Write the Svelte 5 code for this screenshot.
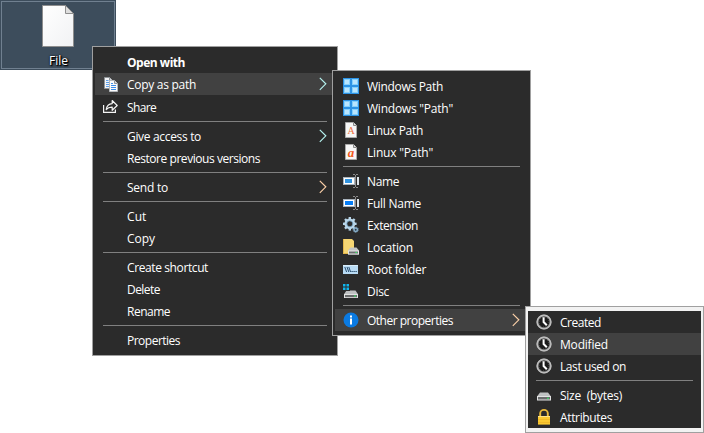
<script>
  const main = [
    { t: 'Open with', w: 58, bold: true },
    { t: 'Copy as path', w: 69, icon: 'copy', arrow: '#b5f2ef', on: true, gap: true },
    { t: 'Share', w: 29, icon: 'share' },
    null,
    { t: 'Give access to', w: 74, arrow: '#b5f2ef' },
    { t: 'Restore previous versions', w: 133 },
    null,
    { t: 'Send to', w: 41, arrow: '#fbd0a8' },
    null,
    { t: 'Cut', w: 19.5 },
    { t: 'Copy', w: 28 },
    null,
    { t: 'Create shortcut', w: 81 },
    { t: 'Delete', w: 33 },
    { t: 'Rename', w: 43 },
    null,
    { t: 'Properties', w: 53 }
  ];
  const paths = [
    { t: 'Windows Path', w: 76, icon: 'win' },
    { t: 'Windows "Path"', w: 86, icon: 'win' },
    { t: 'Linux Path', w: 56, icon: 'doc' },
    { t: 'Linux "Path"', w: 66, icon: 'docItalic' },
    null,
    { t: 'Name', w: 32, icon: 'name' },
    { t: 'Full Name', w: 54, icon: 'fullname' },
    { t: 'Extension', w: 51, icon: 'gear' },
    { t: 'Location', w: 46, icon: 'location' },
    { t: 'Root folder', w: 59, icon: 'root' },
    { t: 'Disc', w: 22, icon: 'disc' },
    null,
    { t: 'Other properties', w: 86, icon: 'info', arrow: '#fbd0a8', on: true }
  ];
  const props = [
    { t: 'Created', w: 41, icon: 'clock' },
    { t: 'Modified', w: 48, icon: 'clock', on: true },
    { t: 'Last used on', w: 66, icon: 'clock' },
    null,
    { t: 'Size  (bytes)', w: 62, icon: 'drive' },
    { t: 'Attributes', w: 52, icon: 'lock' }
  ];
  const teeth = [0, 45, 90, 135, 180, 225, 270, 315];

  // Spreads the label's letters over the given advance width.
  function fit(node, width) {
    const natural = node.getBoundingClientRect().width;
    node.style.letterSpacing = (width - natural) / node.textContent.length + 'px';
  }
</script>

{#snippet drive()}
  <path d="M3.5 7.5h9l2.5 3.7H1z" fill="#bfc1c2" />
  <path d="M1 11h14v4H1z" fill="#e1e2e2" />
  <path d="M2 12h12v2.2H2z" fill="#696b6c" />
  <path d="M11 12.5h2v1h-2z" fill="#35ec62" />
{/snippet}

{#snippet glyph(name)}
  <svg width="16" height="16" viewBox="0 0 16 16">
    {#if name === 'copy'}
      <path d="M1.5 1.5h5l3 3v8h-8z" fill="#f3f5f7" stroke="#8f9498" />
      <path d="M6.5 1.5v3h3" fill="#d5d8db" stroke="#8f9498" />
      <path d="M3 4.5h2.5M3 6.5h4M3 8.5h3M3 10.5h3" stroke="#5e9fe8" />
      <path d="M6.5 4.5h5l3 3v8h-8z" fill="#fafbfc" stroke="#b5b9bc" />
      <path d="M11.5 4.5v3h3" fill="#d5d8db" stroke="#8f9498" />
      <path d="M8 9.5h5M8 11.5h5M8 13.5h5M8 7.5h2" stroke="#3d8de8" />
    {:else if name === 'share'}
      <g fill="none" stroke="#f4f4f4" stroke-width="1.2">
        <path d="M.6 6v7.4h11.8v-3" />
        <path d="M3.2 10.5C3.8 6.6 6 4.7 9.2 4.6V1.5l5 5-5 4.8V8.1C6.5 8 4.8 8.7 3.2 10.5z" stroke-linejoin="round" />
      </g>
    {:else if name === 'win'}
      <path d="M0 0h16v16H0z" fill="#2d93e6" />
      <path d="M1 1h6v6H1zM9 1h6v6H9zM1 9h6v6H1zM9 9h6v6H9z" fill="#85d0fb" />
      <path d="M2 2h4v4H2zM10 2h4v4h-4zM2 10h4v4H2zM10 10h4v4h-4z" fill="#b9e5ff" />
    {:else if name === 'doc' || name === 'docItalic'}
      <path d="M2.5.5h8l3 3v12h-11z" fill="#f7f7f7" stroke="#aaaaaa" />
      <path d="M10.5.5v3h3" fill="#dddddd" stroke="#888888" />
      {#if name === 'doc'}
        <text x="8" y="12" text-anchor="middle" font-family="Liberation Serif, serif" font-size="10" fill="#f0703c">A</text>
      {:else}
        <text x="8" y="12.6" text-anchor="middle" font-family="Liberation Serif, serif" font-size="13" font-weight="bold" font-style="italic" fill="#f15a1c">a</text>
      {/if}
    {:else if name === 'name' || name === 'fullname'}
      <path d="M0 4h12v8H0z" fill="#a9b3bd" />
      <path d="M1 5h10v6H1z" fill="#ffffff" />
      <path d={name === 'name' ? 'M2 6h7v4H2z' : 'M2 6h8v4H2z'} fill={name === 'name' ? '#3294e0' : '#067df5'} />
      <path d="M14 4h2v8h-2z" fill="#dfe5ea" />
      <path d="M10 1.5h2M13 1.5h2M10 14.5h2M13 14.5h2M12.5 2v12" stroke="#8b8b8b" />
    {:else if name === 'gear'}
      <g stroke="#b9d6e9" stroke-width="2.4">
        {#each teeth as a}
          <path d="M6.8 0v3" transform="rotate({a} 6.8 6.8)" />
        {/each}
      </g>
      <circle cx="6.8" cy="6.8" r="4.1" fill="none" stroke="#b9d6e9" stroke-width="2.6" />
      <circle cx="6.8" cy="6.8" r="3" fill="none" stroke="#6d9cbd" stroke-width=".8" />
      <circle cx="12.7" cy="12.7" r="1.7" fill="#2b3942" stroke="#88b0cc" stroke-width="1.5" />
      <circle cx="12.7" cy="12.7" r="2.6" fill="none" stroke="#88b0cc" stroke-width="1" stroke-dasharray="1 1" />
    {:else if name === 'location'}
      <path d="M0 0h9l2 2v13H0z" fill="#f6d673" />
      <path d="M0 0h1v15H0zM1 14h6v1H1z" fill="#e3b64b" />
      <path d="M7.5 8.5h6l2.5 3v4H5v-4z" fill="#c3c5c6" />
      <path d="M5 11.5h11v4H5z" fill="#e6e7e7" />
      <path d="M6 12.5h9v2H6z" fill="#6d6f70" />
      <path d="M12.5 13h1.5v1h-1.5z" fill="#35ec62" />
    {:else if name === 'root'}
      <path d="M0 4h15v9H0z" fill="#b9dbf4" />
      <path d="M0 4h15v1H0z" fill="#d9edfa" />
      <path d="M1.8 6l1.8 5M4 6l1.8 5M5.8 6l1.8 5" stroke="#153a5c" stroke-width=".9" />
      <path d="M8.5 10h1.2v1H8.5zM10.5 10h1.2v1h-1.2zM12.5 10h1.2v1h-1.2z" fill="#153a5c" />
    {:else if name === 'disc'}
      {@render drive()}
      <path d="M-1 0h8v8h-8z" fill="#2b2b2b" />
      <path d="M0 1h2.5v2.5H0zM3.5 1H6v2.5H3.5zM0 4.5h2.5V7H0zM3.5 4.5H6V7H3.5z" fill="#10b6ed" />
    {:else if name === 'info'}
      <circle cx="8" cy="8" r="7.5" fill="#0a7ae2" />
      <path d="M7 3.5h2v2H7zM7 6.5h2v6H7z" fill="#ffffff" />
    {:else if name === 'clock'}
      <circle cx="8" cy="8" r="6.6" fill="#1c1c1c" stroke="#a9a9a9" stroke-width="2" />
      <circle cx="8" cy="8" r="7" fill="none" stroke="#d0d0d0" stroke-width=".7" />
      <circle cx="8" cy="8" r="5" fill="none" stroke="#777777" stroke-width=".9" stroke-dasharray=".8 1.82" />
      <path d="M7.6 3.2V8l3.2 3.2" fill="none" stroke="#ffffff" stroke-width="2" />
    {:else if name === 'drive'}
      <path d="M4 5.5h8l3 4H1z" fill="#bfc1c2" />
      <path d="M1 9h14v4.500H1z" fill="#e1e2e2" />
      <path d="M2 10h12v2.500H2z" fill="#696b6c" />
      <path d="M11 10.8h2v1h-2z" fill="#35ec62" />
    {:else if name === 'lock'}
      <path d="M4.2 7.500V4.300a3.800 3.400 0 0 1 7.600 0v3.200" fill="none" stroke="#e9b93a" stroke-width="1.9" />
      <path d="M2 7h12v8.600H2z" fill="#fbc931" />
      <path d="M2 7h12v1H2z" fill="#ffe48a" />
      <path d="M2 10h12v1H2zM2 13h12v1H2z" fill="#f0b928" />
    {/if}
  </svg>
{/snippet}

{#snippet rows(items)}
  {#each items as it}
    {#if it}
      <li class="row" class:on={it.on} class:gap={it.gap} class:bold={it.bold}>
        <span class="icon">{#if it.icon}{@render glyph(it.icon)}{/if}</span>
        <span class="label" use:fit={it.w}>{it.t}</span>
        {#if it.arrow}
          <svg class="arrow" width="8" height="14" viewBox="0 0 8 14">
            <path d="M.8 .8l6 6-6 6" fill="none" stroke={it.arrow} stroke-width="1.2" />
          </svg>
        {/if}
      </li>
    {:else}
      <li class="sep"></li>
    {/if}
  {/each}
{/snippet}

<div class="desktop">
  <div class="file">
    <div class="frame">
      <svg width="32" height="42" viewBox="0 0 32 42">
        <defs>
          <linearGradient id="sheet" x1="0" y1="0" x2="1" y2="1">
            <stop offset="0" stop-color="#ffffff" /><stop offset="1" stop-color="#f1f2f4" />
          </linearGradient>
        </defs>
        <path d="M.5 .5h23l8 8v33H.5z" fill="url(#sheet)" stroke="#8e8e8e" />
        <path d="M23.5 .5v8h8z" fill="#dedede" stroke="#8e8e8e" />
      </svg>
      <span class="name" use:fit={19}>File</span>
    </div>
  </div>
  <ul class="menu main">{@render rows(main)}</ul>
  <ul class="menu paths">{@render rows(paths)}</ul>
  <ul class="menu props">{@render rows(props)}</ul>
</div>

<style>
  .desktop {
    position: relative;
    width: 704px;
    height: 433px;
    overflow: hidden;
    background: #fff;
    font: 12px/22px 'Open Sans', 'Noto Sans', sans-serif;
    color: #fff;
  }
  .file {
    position: absolute;
    left: 0;
    top: 0;
    box-sizing: border-box;
    width: 116px;
    height: 70px;
    padding: 1px;
    background: #3d4d5c;
  }
  .frame {
    box-sizing: border-box;
    width: 114px;
    height: 68px;
    border: 1px solid #708090;
    padding: 3px 0 0 1px;
    display: flex;
    flex-direction: column;
    align-items: center;
  }
  .frame svg { flex: none; margin-right: 1px; }
  .name {
    line-height: 20px;
    margin-top: 4px;
    white-space: pre;
    text-shadow: 1px 1px 2px #000, 0 0 2px #000, 1px 1px 1px #000;
  }
  .menu {
    position: absolute;
    box-sizing: border-box;
    margin: 0;
    list-style: none;
    background: #2b2b2b;
    border: 1px solid #a0a0a0;
    padding: 4px 2px;
  }
  .main { left: 92px; top: 46px; width: 246px; height: 310px; }
  .paths { left: 332px; top: 70px; width: 199px; height: 266px; }
  .props {
    left: 525px;
    top: 306px;
    width: 179px;
    height: 127px;
    background: linear-gradient(#2b2b2b, #2b2b2b) content-box, #f2f2f2;
  }
  .row {
    display: flex;
    align-items: center;
    height: 22px;
    padding: 0 8px;
  }
  .on { background: #414141; }
  .gap { margin-bottom: 1px; }
  .bold { font-weight: 700; }
  .icon { width: 16px; height: 16px; margin-right: 8px; flex: none; }
  .icon svg { display: block; overflow: visible; }
  .label { white-space: pre; line-height: 20px; padding-top: 1px; }
  .arrow { margin-left: auto; }
  .sep {
    height: 1px;
    margin: 3px 8px;
    background: #808080;
  }
</style>
